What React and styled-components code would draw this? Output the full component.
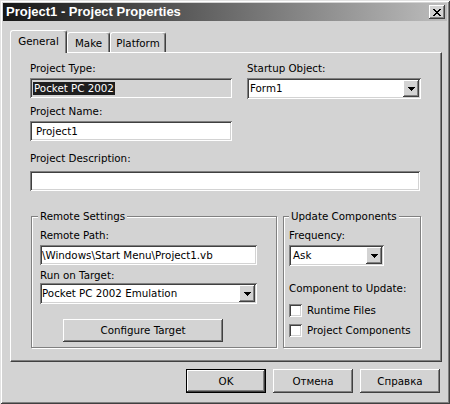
import React from 'react';
import styled, { createGlobalStyle } from 'styled-components';

const FACE = '#d3d3d3';
const SHADOW = '#808080';
const DARK = '#404040';
const LIGHT = '#ffffff';

const sunken = `inset 1px 1px 0 ${SHADOW}, inset -1px -1px 0 ${LIGHT}, inset 2px 2px 0 ${DARK}, inset -2px -2px 0 ${FACE}`;
const raised = `inset -1px -1px 0 ${DARK}, inset 1px 1px 0 ${LIGHT}, inset -2px -2px 0 ${SHADOW}`;

const GlobalStyle = createGlobalStyle`
  html, body { margin: 0; padding: 0; background: ${FACE}; }
  body {
    font-family: "DejaVu Sans", "Noto Sans", sans-serif;
    font-size: 10.3px;
    color: #000;
  }
  *, *::before, *::after { box-sizing: border-box; }
`;

const Window = styled.div`
  width: 450px;
  height: 404px;
  background: ${FACE};
  padding: 3px;
  display: flex;
  flex-direction: column;
  box-shadow: inset 1px 1px 0 #e2e2e2, inset -1px -1px 0 ${DARK}, inset 2px 2px 0 ${LIGHT}, inset -2px -2px 0 ${SHADOW};
`;

const TitleBar = styled.div`
  flex: none;
  height: 18px;
  display: flex;
  align-items: center;
  justify-content: space-between;
  padding: 0 2px 0 3px;
  background: linear-gradient(to right, #161616, #bdbdbd);
`;

const Title = styled.span`
  font-family: "Liberation Sans", Arial, sans-serif;
  font-weight: bold;
  font-size: 13px;
  line-height: 18px;
  color: #fff;
  white-space: nowrap;
`;

const CloseButton = styled.button`
  width: 16px;
  height: 14px;
  padding: 0;
  border: 0;
  background: ${FACE};
  box-shadow: ${raised};
  display: flex;
  align-items: center;
  justify-content: center;
`;

const Body = styled.div`
  flex: 1;
  display: flex;
  flex-direction: column;
  padding: 9px 5px 0 7px;
`;

const TabStrip = styled.div`
  height: 22px;
  display: flex;
  align-items: flex-end;
`;

const Tab = styled.div`
  position: relative;
  z-index: ${p => (p.$active ? 1 : 0)};
  width: ${p => p.$w}px;
  height: ${p => (p.$active ? 23 : 20)}px;
  margin-bottom: ${p => (p.$active ? -1 : 0)}px;
  padding-top: 4px;
  background: ${FACE};
  border-top: 1px solid ${LIGHT};
  border-left: 1px solid ${LIGHT};
  border-right: 1px solid ${DARK};
  border-radius: 3px 3px 0 0;
  box-shadow: inset -1px 0 0 ${SHADOW};
  display: flex;
  justify-content: center;
  line-height: 13px;
  white-space: nowrap;
`;

const Panel = styled.div`
  width: 432px;
  height: 310px;
  background: ${FACE};
  border: 1px solid;
  border-color: ${LIGHT} ${DARK} ${DARK} ${LIGHT};
  box-shadow: inset -1px -1px 0 ${SHADOW};
  padding: 9px 0 0 19px;
`;

const Content = styled.div`
  width: 391px;
  display: flex;
  flex-direction: column;
`;

const TopGrid = styled.div`
  display: grid;
  grid-template-columns: 202px 174px;
  column-gap: 15px;
  align-items: start;
`;

const Column = styled.div`
  display: flex;
  flex-direction: column;
`;

const Label = styled.div`
  line-height: 13px;
  white-space: nowrap;
  margin-top: ${p => p.$mt || 0}px;
  margin-bottom: ${p => (p.$mb ?? 3)}px;
`;

const TextBox = styled.div`
  width: ${p => p.$w}px;
  height: 20px;
  flex: none;
  background: ${p => (p.$disabled ? FACE : '#fff')};
  box-shadow: ${sunken};
  padding-left: ${p => (p.$pad ?? 3)}px;
  display: flex;
  align-items: center;
  line-height: 13px;
  white-space: nowrap;
  overflow: hidden;
`;

const Selected = styled.span`
  background: #1e1e1e;
  color: #fff;
  padding: 0 1px;
`;

const Combo = styled.div`
  width: ${p => p.$w}px;
  height: 21px;
  flex: none;
  background: #fff;
  box-shadow: ${sunken};
  padding: 2px;
  display: flex;
  align-items: center;
`;

const ComboText = styled.span`
  flex: 1;
  padding-left: ${p => (p.$pad ?? 1)}px;
  line-height: 13px;
  white-space: nowrap;
  overflow: hidden;
`;

const DropButton = styled.span`
  width: 16px;
  height: 17px;
  flex: none;
  background: ${FACE};
  box-shadow: ${raised};
  display: flex;
  align-items: center;
  justify-content: center;
`;

const Groups = styled.div`
  margin-top: 19px;
  display: flex;
  align-items: stretch;
  gap: 6px;
`;

const Group = styled.fieldset`
  margin: 0 0 0 ${p => p.$ml || 0}px;
  min-width: 0;
  width: ${p => p.$w}px;
  border: 1px solid ${SHADOW};
  box-shadow: inset 1px 1px 0 ${LIGHT}, 1px 1px 0 ${LIGHT};
  padding: 6px 0 5px ${p => p.$pl}px;
  display: flex;
  flex-direction: column;
  align-items: flex-start;
`;

const Legend = styled.legend`
  padding: 0 2px;
  margin-left: ${p => p.$shift || 0}px;
  line-height: 13px;
  background: ${FACE};
  white-space: nowrap;
`;

const PushButton = styled.button`
  width: ${p => p.$w}px;
  height: ${p => p.$h}px;
  margin: ${p => p.$m || 0};
  flex: none;
  padding: 0;
  font: inherit;
  color: #000;
  background: ${FACE};
  border: ${p => (p.$default ? '1px solid #000' : '0')};
  box-shadow: ${raised};
  line-height: 13px;
`;

const CheckRow = styled.div`
  height: 20px;
  display: flex;
  align-items: center;
  gap: 5px;
  white-space: nowrap;
  line-height: 13px;
`;

const CheckBox = styled.span`
  width: 13px;
  height: 13px;
  flex: none;
  background: #fff;
  box-shadow: ${sunken};
`;

const ButtonRow = styled.div`
  margin-top: 7px;
  padding-right: 2px;
  display: flex;
  justify-content: flex-end;
  gap: 7px;
`;

const Arrow = () => (
  <svg width="7" height="4" viewBox="0 0 7 4" shapeRendering="crispEdges">
    <path d="M0 0h7v1H0z M1 1h5v1H1z M2 2h3v1H2z M3 3h1v1H3z" fill="#000" />
  </svg>
);

const ComboBox = ({ w, value, pad }) => (
  <Combo $w={w}>
    <ComboText $pad={pad}>{value}</ComboText>
    <DropButton>
      <Arrow />
    </DropButton>
  </Combo>
);

export default function App() {
  return (
    <>
      <GlobalStyle />
      <Window>
        <TitleBar>
          <Title>Project1 - Project Properties</Title>
          <CloseButton aria-label="Close">
            <svg width="8" height="7" viewBox="0 0 8 7" shapeRendering="crispEdges">
              <path
                d="M0 0h2v1H0z M6 0h2v1H6z M1 1h2v1H1z M5 1h2v1H5z M2 2h4v1H2z M3 3h2v1H3z M2 4h4v1H2z M1 5h2v1H1z M5 5h2v1H5z M0 6h2v1H0z M6 6h2v1H6z"
                fill="#000"
              />
            </svg>
          </CloseButton>
        </TitleBar>
        <Body>
          <TabStrip>
            <Tab $active $w={57}>General</Tab>
            <Tab $w={43}>Make</Tab>
            <Tab $w={56}>Platform</Tab>
          </TabStrip>
          <Panel>
            <Content>
              <TopGrid>
                <Column>
                  <Label>Project Type:</Label>
                  <TextBox $w={202} $disabled $pad={3}>
                    <Selected>Pocket PC 2002</Selected>
                  </TextBox>
                  <Label $mt={7}>Project Name:</Label>
                  <TextBox $w={202} $pad={6}>Project1</TextBox>
                </Column>
                <Column>
                  <Label>Startup Object:</Label>
                  <ComboBox w={174} value="Form1" />
                </Column>
              </TopGrid>
              <Label $mt={11} $mb={6}>Project Description:</Label>
              <TextBox $w={390} />
              <Groups>
                <Group $w={246} $pl={8} $ml={1}>
                  <Legend $shift={-2}>Remote Settings</Legend>
                  <Label>Remote Path:</Label>
                  <TextBox $w={217} $pad={2}>\Windows\Start Menu\Project1.vb</TextBox>
                  <Label $mt={4} $mb={1}>Run on Target:</Label>
                  <ComboBox w={217} value="Pocket PC 2002 Emulation" pad={0} />
                  <PushButton $w={160} $h={23} $m="15px 0 0 23px">Configure Target</PushButton>
                </Group>
                <Group $w={138} $pl={5}>
                  <Legend>Update Components</Legend>
                  <Label>Frequency:</Label>
                  <ComboBox w={95} value="Ask" pad={2} />
                  <Label $mt={16} $mb={5}>Component to Update:</Label>
                  <CheckRow>
                    <CheckBox />
                    Runtime Files
                  </CheckRow>
                  <CheckRow>
                    <CheckBox />
                    Project Components
                  </CheckRow>
                </Group>
              </Groups>
            </Content>
          </Panel>
          <ButtonRow>
            <PushButton $w={80} $h={24} $default>OK</PushButton>
            <PushButton $w={80} $h={24}>Отмена</PushButton>
            <PushButton $w={80} $h={24}>Справка</PushButton>
          </ButtonRow>
        </Body>
      </Window>
    </>
  );
}
